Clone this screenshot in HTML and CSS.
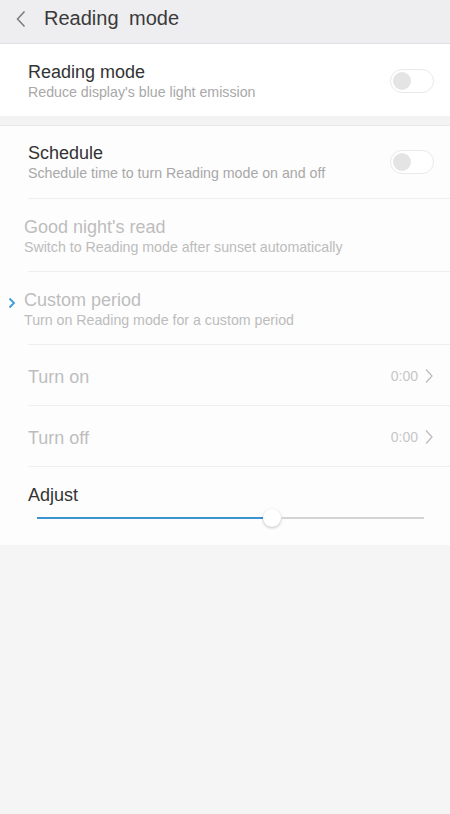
FILE: index.html
```html
<!DOCTYPE html>
<html>
<head>
<meta charset="utf-8">
<link rel="stylesheet" href="styles.css">
</head>
<body>
<header class="topbar">
  <svg class="back" width="12" height="18" viewBox="0 0 12 18"><path d="M9.5 1.5 L2.5 9 L9.5 16.5" fill="none" stroke="#7a7a7a" stroke-width="1.5"/></svg>
  <h1 class="title">Reading mode</h1>
</header>

<section class="card first">
  <div class="row">
    <div class="text">
      <div class="label">Reading mode</div>
      <div class="sub">Reduce display's blue light emission</div>
    </div>
    <span class="toggle"><span class="knob"></span></span>
  </div>
</section>

<div class="gap"></div>

<section class="card second">
  <div class="row line">
    <div class="text">
      <div class="label">Schedule</div>
      <div class="sub">Schedule time to turn Reading mode on and off</div>
    </div>
    <span class="toggle"><span class="knob"></span></span>
  </div>
  <div class="row line">
    <div class="text shift">
      <div class="label dim">Good night's read</div>
      <div class="sub dim">Switch to Reading mode after sunset automatically</div>
    </div>
  </div>
  <div class="row line marked">
    <svg class="mark" width="8" height="12" viewBox="0 0 8 12"><path d="M1.5 1.5 L6 6 L1.5 10.5" fill="none" stroke="#3d9ad6" stroke-width="1.8"/></svg>
    <div class="text shift">
      <div class="label dim">Custom period</div>
      <div class="sub dim">Turn on Reading mode for a custom period</div>
    </div>
  </div>
  <div class="row line short">
    <div class="label dim">Turn on</div>
    <div class="value">0:00<svg width="10" height="16" viewBox="0 0 10 16"><path d="M2 1.5 L8 8 L2 14.5" fill="none" stroke="#bdbdbd" stroke-width="1.3"/></svg></div>
  </div>
  <div class="row line short">
    <div class="label dim">Turn off</div>
    <div class="value">0:00<svg width="10" height="16" viewBox="0 0 10 16"><path d="M2 1.5 L8 8 L2 14.5" fill="none" stroke="#bdbdbd" stroke-width="1.3"/></svg></div>
  </div>
  <div class="adjust">
    <div class="label">Adjust</div>
    <div class="slider">
      <div class="fill" style="width:228px"></div>
      <div class="thumb"></div>
      <div class="rest"></div>
    </div>
  </div>
</section>
</body>
</html>
```
FILE: styles.css
```css
html, body {
  margin: 0;
  padding: 0;
}
body {
  width: 450px;
  height: 814px;
  background: #f5f5f5;
  font-family: "Liberation Sans", Arial, sans-serif;
  overflow: hidden;
}
.topbar {
  height: 43px;
  background: #eeeef0;
  border-bottom: 1px solid #e0e0e2;
  display: flex;
  align-items: center;
  padding-left: 15px;
}
.back {
  margin-right: 17px;
  margin-top: -6px;
}
.title {
  margin: 0;
  font-size: 20px;
  font-weight: normal;
  color: #3a3a3a;
  word-spacing: 5px;
  margin-top: -7px;
}
.card {
  background: #fff;
}
.card.second {
  background: #fdfdfd;
  border-top: 1px solid #e8e8e8;
}
.gap {
  height: 9px;
  background: #f3f3f3;
}
.row {
  margin-left: 28px;
  padding-right: 16px;
  padding-top: 2px;
  box-sizing: border-box;
  display: flex;
  align-items: center;
  justify-content: space-between;
  position: relative;
  height: 73px;
}
.first .row {
  height: 72px;
}
.second .row:first-child {
  padding-top: 0;
}
.row.line {
  border-bottom: 1px solid #efefef;
}
.row.short {
  height: 61px;
}
.text {
  display: flex;
  flex-direction: column;
}
.text.shift {
  margin-left: -4px;
}
.label {
  font-size: 18px;
  line-height: 22px;
  color: #333;
}
.sub {
  font-size: 14.2px;
  line-height: 18px;
  color: #a8a8a8;
}
.label.dim {
  color: #bdbdbd;
}
.sub.dim {
  color: #bcbcbc;
}
.short .label {
  margin-top: 1px;
}
.toggle {
  width: 40px;
  height: 22px;
  border: 1px solid #e9e9e9;
  border-radius: 12px;
  background: #fff;
  display: flex;
  align-items: center;
  padding-left: 2px;
  box-sizing: content-box;
}
.knob {
  width: 18px;
  height: 18px;
  border-radius: 50%;
  background: #e4e4e4;
}
.mark {
  position: absolute;
  left: -20px;
  top: 25px;
}
.value {
  display: flex;
  align-items: center;
  gap: 6px;
  font-size: 14px;
  color: #c6c6c6;
}
.adjust {
  padding: 17px 26px 18px 37px;
}
.adjust .label {
  margin-left: -9px;
}
.slider {
  display: flex;
  align-items: center;
  height: 18px;
  margin-top: 3px;
}
.fill {
  height: 2px;
  background: #3b94cf;
}
.thumb {
  width: 18px;
  height: 18px;
  border-radius: 50%;
  background: #fff;
  box-shadow: 0 1px 3px rgba(0,0,0,0.25);
  margin-left: -2px;
  flex-shrink: 0;
}
.rest {
  flex: 1;
  height: 2px;
  background: #d4d4d4;
}
```
